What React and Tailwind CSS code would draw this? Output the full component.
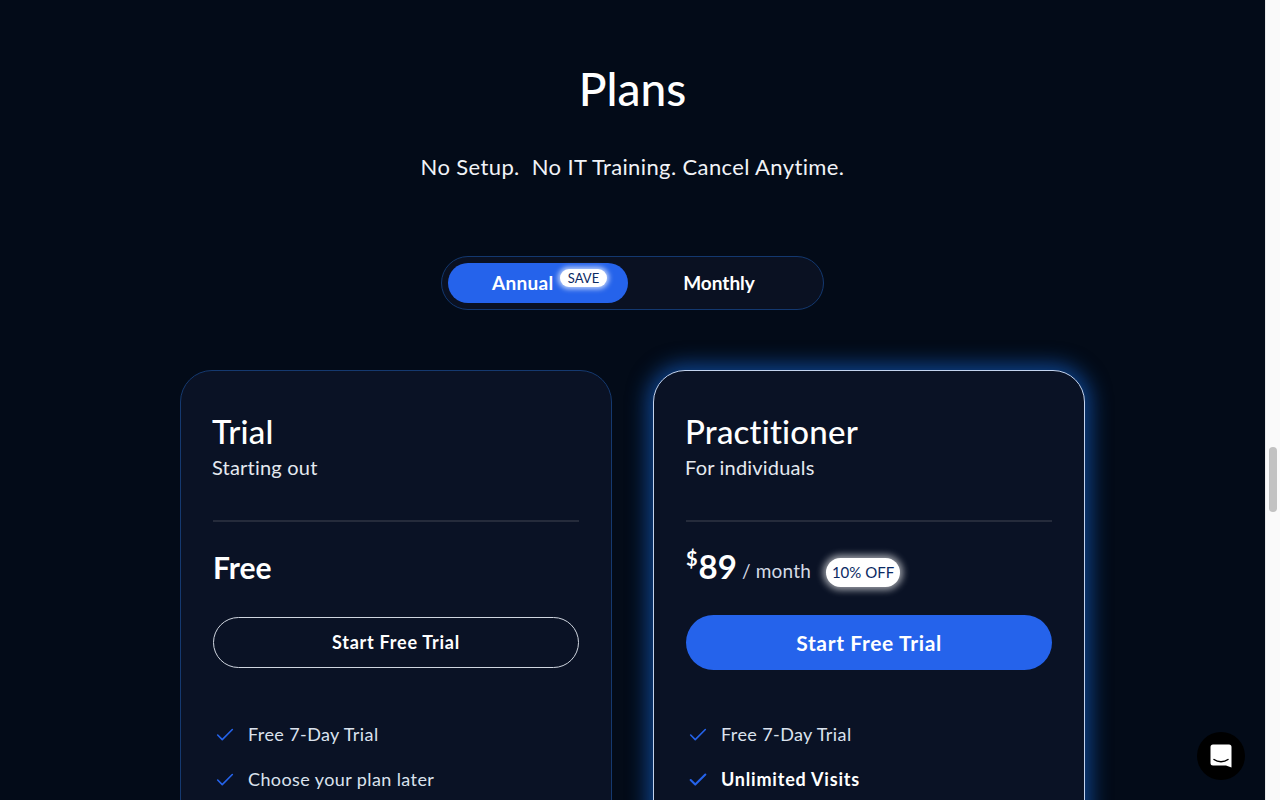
import { Check } from "lucide-react";

const Feature = ({ children, bold }) => (
  <li className="flex items-center h-[45px]">
    <Check size={22} strokeWidth={bold ? 2.25 : 1.75} className="text-[#2563eb] ml-[1px] mr-[12px] shrink-0" />
    <span className={bold ? "text-[18px] font-bold text-white tracking-[0.8px]" : "text-[18px] text-[#dbe2ee] tracking-[0.4px]"}>
      {children}
    </span>
  </li>
);

const PlanHeader = ({ title, subtitle }) => (
  <div className="h-[119px] border-b-2 border-[#252b3b]">
    <h2 className="text-[33px] leading-[40px] font-medium text-white pt-[8px] h-[43px] box-content tracking-[0.2px] -ml-[1px] [font-variant-ligatures:none]">
      {title}
    </h2>
    <p className="text-[20px] leading-[26px] text-[#e5e9f0] tracking-[0.2px] -ml-[1px]">{subtitle}</p>
  </div>
);

export default function App() {
  return (
    <div className="flex h-screen w-full overflow-hidden font-['Lato',sans-serif]">
      <main className="flex-1 h-full overflow-hidden bg-[#030b18] flex flex-col items-center relative">
        <h1 className="mt-[60px] text-[46px] leading-[58px] font-medium text-white">Plans</h1>
        <p className="mt-[34px] text-[22px] leading-[30px] text-[#f1f3f7] tracking-[0.38px] whitespace-pre">
          No Setup.  No IT Training. Cancel Anytime.
        </p>

        <div className="mt-[74px] shrink-0 w-[383px] h-[54px] rounded-full border border-[#13386f] bg-[#0a1122] flex items-center pl-[6px]">
          <div className="relative w-[180px] h-[40px] rounded-full bg-[#2563eb] flex items-center pl-[44px]">
            <span className="text-[19px] font-bold text-white tracking-[0.3px]">Annual</span>
            <span className="absolute left-[112px] top-[6px] h-[18px] w-[47px] rounded-full bg-white text-[#0b2a63] text-[13px] leading-[18px] text-center shadow-[0_0_5px_2px_rgba(255,255,255,0.7)]">
              SAVE
            </span>
          </div>
          <div className="w-[182px] text-center text-[19px] font-bold text-white">Monthly</div>
        </div>

        <div className="mt-[60px] shrink-0 flex gap-[41px] items-start">
          <section className="w-[432px] h-[600px] rounded-[32px] border border-[#15396f] bg-[#0a1225] px-[32px] pt-[32px]">
            <PlanHeader title="Trial" subtitle="Starting out" />
            <div className="h-[95px] flex items-center">
              <span className="text-[30px] font-bold text-white mb-[4px]">Free</span>
            </div>
            <button className="w-full h-[51px] rounded-full border border-[#cfd5df] text-white text-[18px] font-bold tracking-[0.75px]">
              Start Free Trial
            </button>
            <ul className="mt-[44px]">
              <Feature>Free 7-Day Trial</Feature>
              <Feature>Choose your plan later</Feature>
            </ul>
          </section>

          <section className="w-[432px] h-[600px] rounded-[32px] border border-[#c3d3ee] bg-[#0a1225] px-[32px] pt-[32px] shadow-[0_0_20px_6px_rgba(20,100,210,0.6)]">
            <PlanHeader title="Practitioner" subtitle="For individuals" />
            <div className="h-[93px] flex items-center">
              <span className="text-[20px] font-bold text-white self-start mt-[24px] leading-[24px]">$</span>
              <span className="ml-[1px] mb-[4px] text-[33px] font-bold text-white">89</span>
              <span className="ml-[5px] mt-[5px] text-[19px] text-[#d5dbe6] tracking-[0.2px]">/ month</span>
              <span className="ml-[15px] mt-[8px] w-[74px] h-[29px] rounded-full bg-white text-[#0b2a63] text-[15px] leading-[29px] text-center shadow-[0_0_7px_3px_rgba(255,255,255,0.6)]">
                10% OFF
              </span>
            </div>
            <button className="w-full h-[55px] rounded-full bg-[#2563eb] text-white text-[21px] font-bold tracking-[0.65px]">
              Start Free Trial
            </button>
            <ul className="mt-[42px]">
              <Feature>Free 7-Day Trial</Feature>
              <Feature bold>Unlimited Visits</Feature>
            </ul>
          </section>
        </div>

        <button className="absolute left-[1197px] top-[732px] w-[48px] h-[48px] rounded-full bg-black flex items-center justify-center">
          <svg width="22" height="24" viewBox="0 0 22 24">
            <path
              d="M3 0.5h16a2.5 2.5 0 0 1 2.5 2.5v20.5l-5.5-2H3A2.5 2.5 0 0 1 0.5 19V3A2.5 2.5 0 0 1 3 0.5z"
              fill="#fff"
            />
            <path d="M4 15.5c4 3 10 3 14 0" fill="none" stroke="#000" strokeWidth="1.5" strokeLinecap="round" />
          </svg>
        </button>
      </main>

      <div className="w-[15px] h-full bg-[#fafafa] border-l border-[#ececec] pt-[447px] pl-[3px]">
        <div className="w-[8px] h-[65px] rounded-full bg-[#c2c2c2]" />
      </div>
    </div>
  );
}
